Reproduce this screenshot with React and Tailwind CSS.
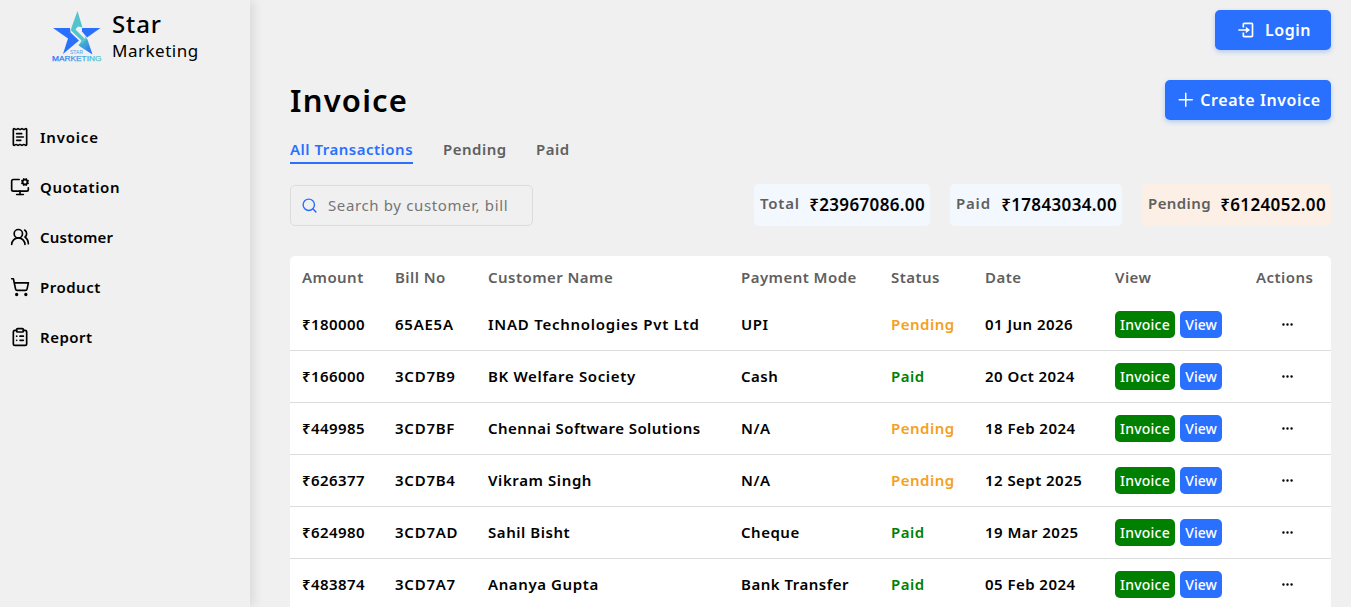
import { useState } from 'react'
import { ReceiptText, MonitorCog, UsersRound, ShoppingCart, ClipboardList, Search } from 'lucide-react'
import { BiLogIn } from 'react-icons/bi'
import { GoPlus } from 'react-icons/go'
import { BsThreeDots } from 'react-icons/bs'

const navItems = [
  { label: 'Invoice', icon: ReceiptText, track: 'tracking-[0.8px]' },
  { label: 'Quotation', icon: MonitorCog, track: 'tracking-[0.6px]' },
  { label: 'Customer', icon: UsersRound, track: 'tracking-[0.2px]' },
  { label: 'Product', icon: ShoppingCart, track: 'tracking-[0.5px]' },
  { label: 'Report', icon: ClipboardList, track: 'tracking-[0.5px]' },
]

const tabs = [
  { label: 'All Transactions', width: 'w-[123px]' },
  { label: 'Pending', width: 'w-[63px]' },
  { label: 'Paid', width: 'w-[36px]' },
]

const stats = [
  { label: 'Total', value: '₹23967086.00', box: 'w-[176px] bg-[#f3f8ff]', track: 'tracking-[0.8px]' },
  { label: 'Paid', value: '₹17843034.00', box: 'w-[172px] bg-[#f3f8ff]', track: 'tracking-[0.8px]' },
  { label: 'Pending', value: '₹6124052.00', box: 'w-[189px] bg-[#fcefe6]', track: 'tracking-[0.4px]' },
]

const columns = [
  { label: 'Amount', width: 'w-[93px]' },
  { label: 'Bill No', width: 'w-[93px]' },
  { label: 'Customer Name', width: 'w-[253px]' },
  { label: 'Payment Mode', width: 'w-[150px]' },
  { label: 'Status', width: 'w-[94px]' },
  { label: 'Date', width: 'w-[130px]' },
  { label: 'View', width: 'w-[141px]' },
  { label: 'Actions', width: 'w-[87px]' },
]

const invoices = [
  { amount: 180000, bill: '65AE5A', customer: 'INAD Technologies Pvt Ltd', mode: 'UPI', status: 'Pending', date: '01 Jun 2026', track: 'tracking-[0.75px]' },
  { amount: 166000, bill: '3CD7B9', customer: 'BK Welfare Society', mode: 'Cash', status: 'Paid', date: '20 Oct 2024', track: 'tracking-[0.65px]' },
  { amount: 449985, bill: '3CD7BF', customer: 'Chennai Software Solutions', mode: 'N/A', status: 'Pending', date: '18 Feb 2024', track: 'tracking-[0.44px]' },
  { amount: 626377, bill: '3CD7B4', customer: 'Vikram Singh', mode: 'N/A', status: 'Pending', date: '12 Sept 2025', track: 'tracking-[0.6px]' },
  { amount: 624980, bill: '3CD7AD', customer: 'Sahil Bisht', mode: 'Cheque', status: 'Paid', date: '19 Mar 2025', track: 'tracking-[0.55px]' },
  { amount: 483874, bill: '3CD7A7', customer: 'Ananya Gupta', mode: 'Bank Transfer', status: 'Paid', date: '05 Feb 2024', track: 'tracking-[0.6px]' },
]

function Logo() {
  return (
    <svg width="52" height="52" viewBox="0 0 52 52">
      <defs>
        <linearGradient id="word" x1="0" x2="1">
          <stop offset="0" stopColor="#2970ff" />
          <stop offset="1" stopColor="#5cc8cc" />
        </linearGradient>
        <linearGradient id="tail" x1="0" y1="0" x2="0.6" y2="1">
          <stop offset="0" stopColor="#52c4cc" />
          <stop offset="0.6" stopColor="#3f9fd8" />
          <stop offset="1" stopColor="#2970ff" />
        </linearGradient>
      </defs>
      <path d="M2 17H19L19.500 21.500L28 29.500L12 43L17 27.500Z" fill="#2970ff" />
      <path d="M31 17H49.500L36 26.500L31 20.500Z" fill="#2970ff" />
      <path d="M26.500 0L31.500 16.500L27 15.500L24.500 18.500L34 28C35 30 34 31.500 31.500 34L27.500 35L30.500 29.500L20 19.500L20.500 16.500Z" fill="#52c4cc" />
      <path d="M33.500 25L36.500 28.500L41.500 43.500L29 35.500L27.500 33.500L32 32C34.500 30 35 28 33.500 25Z" fill="url(#tail)" />
      <text x="19" y="43.200" fontSize="5" textLength="13" fill="#4f9fea" fontFamily="Liberation Sans, sans-serif">STAR</text>
      <text x="1" y="50" fontSize="8" textLength="49.500" lengthAdjust="spacingAndGlyphs" fill="url(#word)" stroke="url(#word)" strokeWidth="0.250" fontFamily="Liberation Sans, sans-serif">MARKETING</text>
    </svg>
  )
}

function Sidebar() {
  return (
    <aside className="relative w-[250px] shrink-0 h-full bg-[#f0f0f0] shadow-[4px_0_10px_rgba(0,0,0,0.09)]">
      <div className="flex pl-[51px] pt-[11px] h-[112px]">
        <Logo />
        <div className="pl-[9px] -mt-px">
          <h2 className="text-[24px] leading-[28px] font-medium tracking-[0.9px]">Star</h2>
          <p className="text-[17px] leading-[25px] tracking-[0.5px]">Marketing</p>
        </div>
      </div>
      <nav>
        {navItems.map(({ label, icon: Icon, track }) => (
          <a key={label} className="flex items-center h-[50px] pl-[10px] gap-[10px]">
            <Icon size={20} strokeWidth={2} />
            <span className={`text-[15px] font-semibold ${track}`}>{label}</span>
          </a>
        ))}
      </nav>
    </aside>
  )
}

function Stat({ label, value, box, track }) {
  return (
    <div className={`flex justify-between h-[42px] rounded-[5px] pl-[6px] pr-[5px] pt-[7px] whitespace-nowrap ${box}`}>
      <span className={`text-[15px] leading-6 font-semibold text-[#5f5f5f] ${track}`}>{label}</span>
      <span className="text-[17px] leading-[27px] font-semibold tracking-[0.35px]">{value}</span>
    </div>
  )
}

export default function App() {
  const [activeTab, setActiveTab] = useState('All Transactions')

  return (
    <div className="flex h-screen overflow-hidden bg-[#f0f0f0] text-black font-['Noto_Sans',sans-serif]">
      <Sidebar />
      <main className="flex-1 pl-10 pr-5 pt-[10px]">
        <div className="flex justify-end">
          <button className="flex items-center justify-center gap-[10px] w-[116px] h-10 rounded-[5px] bg-[#2970ff] text-white font-semibold text-[16px] tracking-[0.5px] shadow-[0_2px_5px_rgba(41,112,255,0.3)]">
            <BiLogIn size={20} />
            Login
          </button>
        </div>

        <div className="flex justify-between items-center mt-[30px] h-10">
          <h1 className="text-[31px] leading-10 font-semibold tracking-[1.2px]">Invoice</h1>
          <button className="flex items-center justify-center gap-[2px] w-[166px] h-10 pr-px rounded-[5px] bg-[#2970ff] text-white font-semibold text-[16px] tracking-[0.6px] shadow-[0_2px_5px_rgba(41,112,255,0.3)]">
            <GoPlus size={24} />
            Create Invoice
          </button>
        </div>

        <div className="flex gap-[30px] mt-[17px]">
          {tabs.map((tab) => (
            <button
              key={tab.label}
              onClick={() => setActiveTab(tab.label)}
              className={`h-[27px] pb-px border-b-2 text-left whitespace-nowrap text-[15px] leading-[22px] font-semibold tracking-[0.5px] ${tab.width} ${activeTab === tab.label ? 'text-[#2970ff] border-[#2970ff]' : 'text-[#5f5f5f] border-transparent'}`}
            >
              {tab.label}
            </button>
          ))}
        </div>

        <div className="flex justify-between items-start mt-5">
          <div className="flex items-center w-[243px] h-[41px] mt-px pl-[10px] gap-[10px] border border-[#dcdcdc] rounded-[5px]">
            <Search size={17} className="text-[#2970ff] shrink-0" />
            <input
              className="w-[195px] bg-transparent outline-none text-[15px] tracking-[0.63px] placeholder:text-[#757575]"
              placeholder="Search by customer, bill"
            />
          </div>
          <div className="flex gap-5">
            {stats.map((stat) => <Stat key={stat.label} {...stat} />)}
          </div>
        </div>

        <div className="mt-[30px] rounded-t-[5px] bg-white">
          <table className="w-full table-fixed border-collapse text-left whitespace-nowrap text-[15px] font-semibold">
            <thead>
              <tr className="h-[42px] text-[#5f5f5f]">
                {columns.map((col) => (
                  <th key={col.label} className={`px-3 pt-px font-semibold tracking-[0.45px] ${col.width}`}>{col.label}</th>
                ))}
              </tr>
            </thead>
            <tbody>
              {invoices.map((invoice, i) => (
                <tr key={invoice.bill} className="h-[52px] border-b border-[#dcdcdc]">
                  <td className="px-3 tracking-[0.4px]">₹{invoice.amount}</td>
                  <td className="px-3 tracking-[0.75px]">{invoice.bill}</td>
                  <td className={`px-3 ${invoice.track}`}>{invoice.customer}</td>
                  <td className="px-3 tracking-[0.5px]">{invoice.mode}</td>
                  <td className={`px-3 tracking-[0.5px] ${invoice.status === 'Paid' ? 'text-[#008000]' : 'text-[#f5a020]'}`}>{invoice.status}</td>
                  <td className="px-3 tracking-[0.45px]">{invoice.date}</td>
                  <td className={i === 0 ? 'px-3 pt-px' : 'px-3'}>
                    <div className="flex gap-[5px] text-white text-[14px] font-medium">
                      <button className="w-[60px] h-[27px] rounded-[5px] bg-[#008000] tracking-[0.2px]">Invoice</button>
                      <button className="w-[42px] h-[27px] rounded-[5px] bg-[#2970ff]">View</button>
                    </div>
                  </td>
                  <td className="pt-px">
                    <BsThreeDots size={13} className="mx-auto" />
                  </td>
                </tr>
              ))}
            </tbody>
          </table>
        </div>
      </main>
    </div>
  )
}
